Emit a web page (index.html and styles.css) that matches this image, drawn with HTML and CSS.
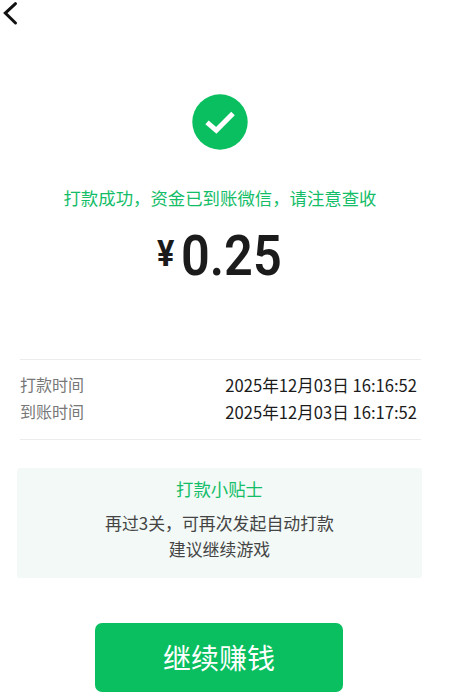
FILE: index.html
```html
<!DOCTYPE html>
<html lang="zh-CN">
<head>
<meta charset="utf-8">
<title>打款成功</title>
<link rel="stylesheet" href="styles.css">
</head>
<body>
<main class="page">
  <header class="nav">
    <svg class="back" viewBox="0 0 20 28"><path d="M15.5 3.7 L5.3 13.1 L15.5 23"/></svg>
  </header>
  <section class="result">
    <svg class="success" viewBox="0 0 56 56"><circle cx="28" cy="28" r="27.7"/><path d="M15 28.3 L24.3 36.3 L41 19.5"/></svg>
    <p class="message">打款成功，资金已到账微信，请注意查收</p>
    <p class="amount"><span class="yen">¥</span><span class="num">0.25</span></p>
  </section>
  <dl class="details">
    <div class="row"><dt>打款时间</dt><dd>2025年12月03日 16:16:52</dd></div>
    <div class="row"><dt>到账时间</dt><dd>2025年12月03日 16:17:52</dd></div>
  </dl>
  <section class="tips">
    <h2>打款小贴士</h2>
    <p>再过3关，可再次发起自动打款</p>
    <p>建议继续游戏</p>
  </section>
  <button class="cta">继续赚钱</button>
</main>
</body>
</html>
```
FILE: styles.css
```css
* { box-sizing: border-box; margin: 0; padding: 0; }
body { background: #fff; font-family: "Noto Sans CJK SC", sans-serif; color: #1b1b1b; }
.page { width: 450px; height: 696px; overflow: hidden; display: flex; flex-direction: column; }
.nav { height: 28px; }
.back { display: block; width: 20px; height: 28px; fill: none; stroke: #111; stroke-width: 3; stroke-linecap: round; }
.result { width: 440px; height: 331px; padding-top: 66px; display: flex; flex-direction: column; align-items: center; }
.success { width: 56px; height: 56px; }
.success circle { fill: #0abf5f; }
.success path { fill: none; stroke: #fff; stroke-width: 5; }
.message { margin-top: 35px; font-size: 17.4px; line-height: 26px; color: #14bd68; white-space: nowrap; }
.amount { margin-top: 13px; display: flex; align-items: center; height: 64px; width: 126px; font-family: Roboto, sans-serif; line-height: 64px; white-space: nowrap; }
.yen { flex: none; width: 24px; font-size: 36px; font-weight: 700; transform: translateY(-2px) scaleX(.9); transform-origin: left; }
.num { font-size: 56px; font-weight: 600; transform: scaleX(.9); transform-origin: left; }
.details { margin-left: 20px; width: 401px; height: 81px; padding: 12px 4px 0 0; border-top: 1px solid #ececec; border-bottom: 1px solid #ececec; }
.row { display: flex; justify-content: space-between; height: 27px; line-height: 26px; font-size: 16px; }
.row dt { color: #777; line-height: 25px; }
.row dd { font-size: 16.6px; }
.tips { margin: 28px 0 0 17px; width: 405px; height: 110px; padding-top: 8px; background: #f2f9f6; border-radius: 3px; text-align: center; }
.tips h2 { font-size: 17.4px; font-weight: 400; line-height: 26px; color: #14bd68; margin-bottom: 8px; }
.tips p { font-size: 16.9px; line-height: 26px; color: #444; }
.cta { margin: 45px 0 0 95px; width: 248px; height: 69px; padding-bottom: 2px; border: 0; border-radius: 7px; background: #0abf5f; color: #fff; font: 400 28px "Noto Sans CJK SC", sans-serif; }
```
